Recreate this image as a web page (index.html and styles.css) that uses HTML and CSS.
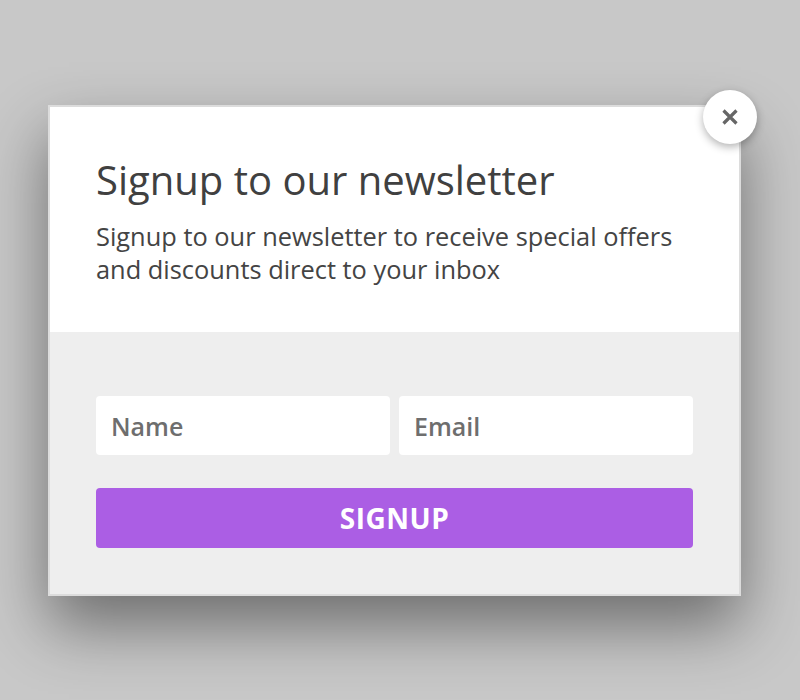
FILE: index.html
```html
<!DOCTYPE html>
<html lang="en">
<head>
<meta charset="utf-8">
<title>Newsletter</title>
<link rel="stylesheet" href="styles.css">
</head>
<body>
<div class="stage">
  <div class="modal">
    <button class="close" aria-label="Close">
      <svg width="22" height="22" viewBox="0 0 22 22"><path d="M4.5 4.5 L17.5 17.5 M17.5 4.5 L4.5 17.5" stroke="#666" stroke-width="3.2" fill="none"/></svg>
    </button>
    <div class="head">
      <h1 class="title">Signup to our newsletter</h1>
      <p class="lead">Signup to our newsletter to receive special offers and discounts direct to your inbox</p>
    </div>
    <form class="form">
      <div class="row">
        <input class="field" type="text" placeholder="Name">
        <input class="field" type="email" placeholder="Email">
      </div>
      <button class="submit" type="button">SIGNUP</button>
    </form>
  </div>
</div>
</body>
</html>
```
FILE: styles.css
```css
html, body {
  margin: 0;
  padding: 0;
  height: 100%;
}
body {
  background: #c8c8c8;
  font-family: "Open Sans", "Liberation Sans", sans-serif;
}
.stage {
  padding: 105px 0 0 48px;
}
.modal {
  position: relative;
  width: 689px;
  border: 2px solid #dcdcdc;
  background: #fff;
  box-shadow: 0 30px 60px rgba(0, 0, 0, 0.45);
}
.close {
  position: absolute;
  top: -17px;
  right: -18px;
  width: 54px;
  height: 54px;
  border-radius: 50%;
  border: none;
  background: #fff;
  box-shadow: 0 3px 8px rgba(0, 0, 0, 0.3);
  display: flex;
  align-items: center;
  justify-content: center;
  padding: 0;
}
.head {
  padding: 50px 46px 46px 46px;
}
.title {
  margin: 0;
  font-size: 40px;
  font-weight: 400;
  line-height: 46px;
  color: #404040;
}
.lead {
  margin: 17px 0 0;
  font-size: 25.4px;
  line-height: 33px;
  color: #444;
}
.form {
  background: #eee;
  padding: 64px 46px 46px 46px;
  display: flex;
  flex-direction: column;
  gap: 33px;
}
.row {
  display: flex;
  gap: 9px;
}
.field {
  flex: 1;
  min-width: 0;
  height: 59px;
  box-sizing: border-box;
  border: none;
  border-radius: 4px;
  background: #fff;
  padding: 0 15px;
  font-family: inherit;
  font-size: 25px;
  color: #333;
}
.field::placeholder {
  color: #6e6e6e;
  font-weight: 600;
}
.submit {
  height: 60px;
  border: none;
  border-radius: 4px;
  background: #ab5ee4;
  color: #fff;
  font-family: inherit;
  font-size: 28px;
  font-weight: 700;
  letter-spacing: 0.5px;
}
```
